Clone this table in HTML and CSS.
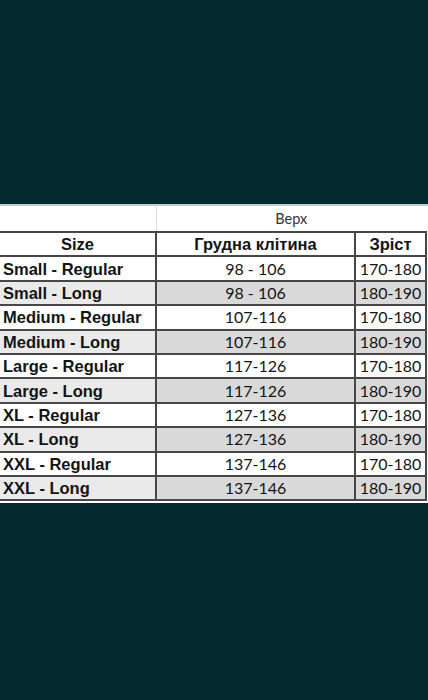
FILE: index.html
```html
<!DOCTYPE html>
<html lang="uk">
<head>
<meta charset="utf-8">
<title>Розмірна сітка</title>
<link rel="stylesheet" href="styles.css">
</head>
<body>
<div class="page">
  <div class="dark top"></div>
  <div class="sheet">
    <table class="sizes">
      <colgroup>
        <col class="c1">
        <col class="c2">
        <col class="c3">
      </colgroup>
      <tr class="group">
        <td class="blank"></td>
        <td class="verh" colspan="2">Верх</td>
      </tr>
      <tr class="head">
        <th>Size</th>
        <th>Грудна клітина</th>
        <th>Зріст</th>
      </tr>
      <tr><td class="name">Small - Regular</td><td class="num">98 - 106</td><td class="num">170-180</td></tr>
      <tr class="alt"><td class="name">Small - Long</td><td class="num">98 - 106</td><td class="num">180-190</td></tr>
      <tr><td class="name">Medium - Regular</td><td class="num">107-116</td><td class="num">170-180</td></tr>
      <tr class="alt"><td class="name">Medium - Long</td><td class="num">107-116</td><td class="num">180-190</td></tr>
      <tr><td class="name">Large - Regular</td><td class="num">117-126</td><td class="num">170-180</td></tr>
      <tr class="alt"><td class="name">Large - Long</td><td class="num">117-126</td><td class="num">180-190</td></tr>
      <tr><td class="name">XL - Regular</td><td class="num">127-136</td><td class="num">170-180</td></tr>
      <tr class="alt"><td class="name">XL - Long</td><td class="num">127-136</td><td class="num">180-190</td></tr>
      <tr><td class="name">XXL - Regular</td><td class="num">137-146</td><td class="num">170-180</td></tr>
      <tr class="alt"><td class="name">XXL - Long</td><td class="num">137-146</td><td class="num">180-190</td></tr>
    </table>
  </div>
  <div class="dark bottom"></div>
</div>
</body>
</html>
```

FILE: styles.css
```css
html, body {
  margin: 0;
  padding: 0;
  background: #04292e;
}

.page {
  width: 428px;
  height: 700px;
  display: flex;
  flex-direction: column;
}

.dark {
  background: #04292e;
}

.top {
  height: 204px;
  flex: none;
}

.bottom {
  flex: 1;
}

.sheet {
  background: #ffffff;
  border-top: 2px solid #c9c9c9;
  padding: 0 2px 2px 0;
}

.sizes {
  border-collapse: collapse;
  table-layout: fixed;
  width: 426px;
  color: #141414;
}

.c1 { width: 156px; }
.c2 { width: 199px; }
.c3 { width: 71px; }

.sizes td,
.sizes th {
  padding: 0;
  border: 2px solid #474747;
  height: 22.4px;
  line-height: 22px;
  white-space: nowrap;
  overflow: hidden;
}

.sizes tr.group td {
  border: none;
  height: 25px;
}

.sizes tr.group td.verh {
  border-left: 1px solid #dcdcdc;
  text-align: center;
  font-family: Lato, "Noto Sans", sans-serif;
  font-size: 14.5px;
  color: #333333;
}

.sizes tr.group td.blank {
  border: none;
}

.sizes th {
  font-family: "Liberation Sans", Arial, sans-serif;
  font-weight: bold;
  font-size: 16.5px;
  text-align: center;
}

.sizes td.name {
  border-left: none;
  padding-left: 3px;
  font-family: "Liberation Sans", Arial, sans-serif;
  font-weight: bold;
  font-size: 16.5px;
  text-align: left;
}

.sizes th:first-child {
  border-left: none;
}

.sizes td.num {
  font-family: Lato, "Noto Sans", sans-serif;
  font-size: 16px;
  text-align: center;
}

.sizes tr.alt td.name {
  background: #eaeaea;
}

.sizes tr.alt td.num {
  background: #d9d9d9;
}
```
